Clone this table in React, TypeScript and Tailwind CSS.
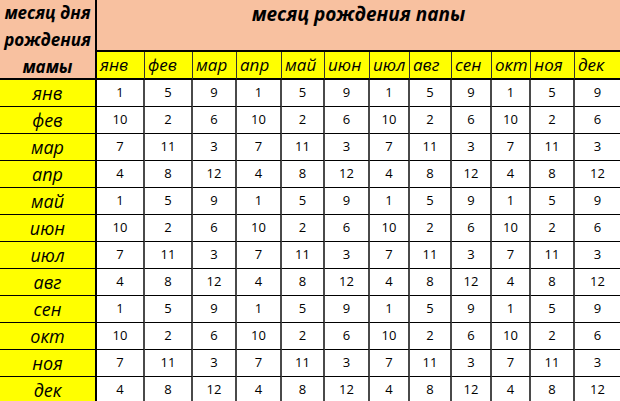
import React from "react";

const months = ["янв", "фев", "мар", "апр", "май", "июн", "июл", "авг", "сен", "окт", "ноя", "дек"];
const pattern = [
  [1, 5, 9],
  [10, 2, 6],
  [7, 11, 3],
  [4, 8, 12],
];

const font = { fontFamily: '"Open Sans", "Noto Sans", sans-serif' };

export default function App() {
  return (
    <div className="w-[620px] h-[401px] overflow-hidden bg-white" style={font}>
      <div className="grid grid-cols-[97px_48px_48px_44px_45px_43px_45px_40px_42px_40px_39px_44px_45px] grid-rows-[52px_28px_repeat(12,27px)]">
        <div className="row-span-2 bg-[#f8c1a0] border-r-2 border-b-2 border-black flex flex-col items-center justify-center text-[17px] leading-[27px] font-bold italic text-black whitespace-nowrap">
          <span>месяц дня</span>
          <span>рождения</span>
          <span>мамы</span>
        </div>
        <div className="col-span-12 bg-[#f8c1a0] border-b-2 border-black flex justify-center pt-[2px] text-[19px] leading-[24px] font-bold italic text-black">
          месяц рождения папы
        </div>
        {months.map((m, i) => (
          <div
            key={"h" + m}
            className={
              "bg-[#ffff00] border-b-2 border-black flex items-center pl-[3px] text-[17px] italic text-black whitespace-nowrap overflow-visible " +
              (i < 11 ? "border-r border-r-[#333]" : "")
            }
          >
            {m}
          </div>
        ))}
        {months.map((m, r) => (
          <React.Fragment key={"r" + m}>
            <div className="bg-[#ffff00] border-r-2 border-b border-black flex items-center justify-center text-[18px] italic text-black">
              {m}
            </div>
            {months.map((_, c) => (
              <div
                key={c}
                className={
                  "bg-white border-b border-b-black flex items-center justify-center text-[13px] text-black " +
                  (c < 11 ? "border-r-2 border-r-[#4a4a4a]" : "")
                }
              >
                {pattern[r % 4][c % 3]}
              </div>
            ))}
          </React.Fragment>
        ))}
      </div>
    </div>
  );
}
